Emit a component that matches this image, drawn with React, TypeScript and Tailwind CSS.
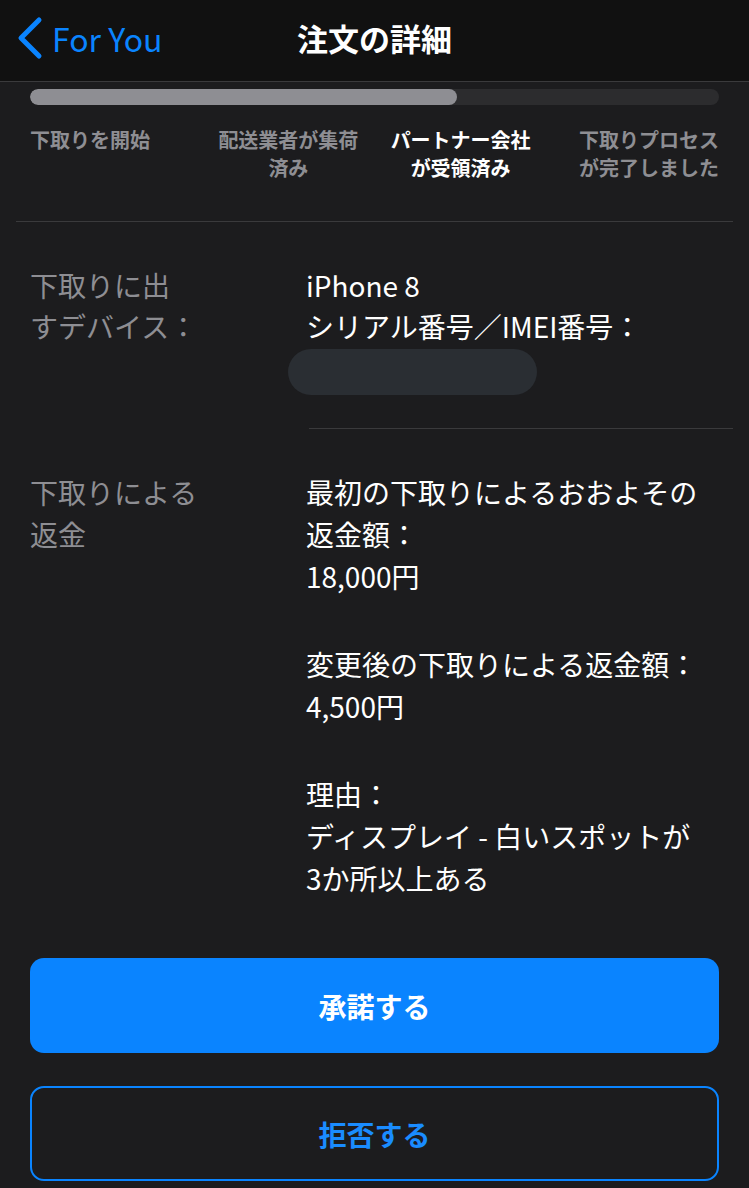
const font = { fontFamily: '"Noto Sans CJK JP", "Noto Sans", sans-serif' };

function BackChevron() {
  return (
    <svg width="28" height="44" viewBox="0 0 28 44" fill="none" className="shrink-0">
      <polyline
        points="23,4 5,22 23,40"
        stroke="#0a84ff"
        strokeWidth="5"
        strokeLinecap="round"
        strokeLinejoin="round"
      />
    </svg>
  );
}

export default function App() {
  const steps = [
    { label: ["下取りを開始"], align: "items-start", active: false },
    { label: ["配送業者が集荷", "済み"], align: "items-center", active: false },
    { label: ["パートナー会社", "が受領済み"], align: "items-center", active: true },
    { label: ["下取りプロセス", "が完了しました"], align: "items-end", active: false },
  ];

  return (
    <div className="min-h-[1188px] w-[749px] bg-[#1c1c1e] text-white" style={font}>
      {/* nav bar */}
      <header className="relative flex h-[82px] items-center border-b border-[#3a3a3c] bg-[#111111] pb-[6px]">
        <div className="flex items-center gap-[8px] pl-[16px] text-[#0a84ff]">
          <BackChevron />
          <span className="text-[32px] leading-none">For You</span>
        </div>
        <h1 className="pointer-events-none absolute left-0 right-0 text-center text-[31px] font-bold leading-none">
          注文の詳細
        </h1>
      </header>

      {/* progress */}
      <div className="mx-[16px] border-b border-[#3a3a3c] px-[14px] pb-[39px] pt-[7px]">
        <div className="h-[16px] w-full overflow-hidden rounded-full bg-[#2c2c2e]">
          <div className="h-full w-[62%] rounded-full bg-[#8e8e93]" />
        </div>
        <div className="mt-[21px] grid grid-cols-4">
          {steps.map((s, i) => (
            <div
              key={i}
              className={`flex flex-col ${s.align} text-[20px] font-semibold leading-[28px] ${s.active ? "text-white" : "text-[#8e8e93]"}`}
            >
              {s.label.map((l) => (
                <span key={l} className="whitespace-nowrap">{l}</span>
              ))}
            </div>
          ))}
        </div>
      </div>

      {/* device row */}
      <div className="grid grid-cols-[276px_1fr] pl-[30px] pt-[43px] text-[28px] leading-[41px]">
        <div className="text-[#8e8e93]">
          <div>下取りに出</div>
          <div>すデバイス：</div>
        </div>
        <div>
          <div>iPhone 8</div>
          <div>シリアル番号／IMEI番号：</div>
          <div className="-ml-[18px] mt-[2px] h-[46px] w-[249px] rounded-full bg-[#2a2e33]" />
        </div>
      </div>
      <div className="ml-[309px] mr-[16px] mt-[33px] border-b border-[#3a3a3c]" />

      {/* refund row */}
      <div className="grid grid-cols-[276px_1fr] pl-[30px] pt-[42px] text-[28px] leading-[42px]">
        <div className="text-[#8e8e93]">
          <div>下取りによる</div>
          <div>返金</div>
        </div>
        <div className="flex flex-col gap-[46px]">
          <div>
            <div>最初の下取りによるおおよその</div>
            <div>返金額：</div>
            <div>18,000円</div>
          </div>
          <div>
            <div>変更後の下取りによる返金額：</div>
            <div>4,500円</div>
          </div>
          <div>
            <div>理由：</div>
            <div>ディスプレイ - 白いスポットが</div>
            <div>3か所以上ある</div>
          </div>
        </div>
      </div>

      {/* actions */}
      <div className="mt-[59px] flex flex-col gap-[33px] px-[30px]">
        <button className="h-[95px] w-full rounded-[14px] bg-[#0a84ff] text-[28px] font-bold text-white">
          承諾する
        </button>
        <button className="h-[95px] w-full rounded-[14px] border-2 border-[#0a84ff] text-[28px] font-bold text-[#1a8cff]">
          拒否する
        </button>
      </div>
    </div>
  );
}
